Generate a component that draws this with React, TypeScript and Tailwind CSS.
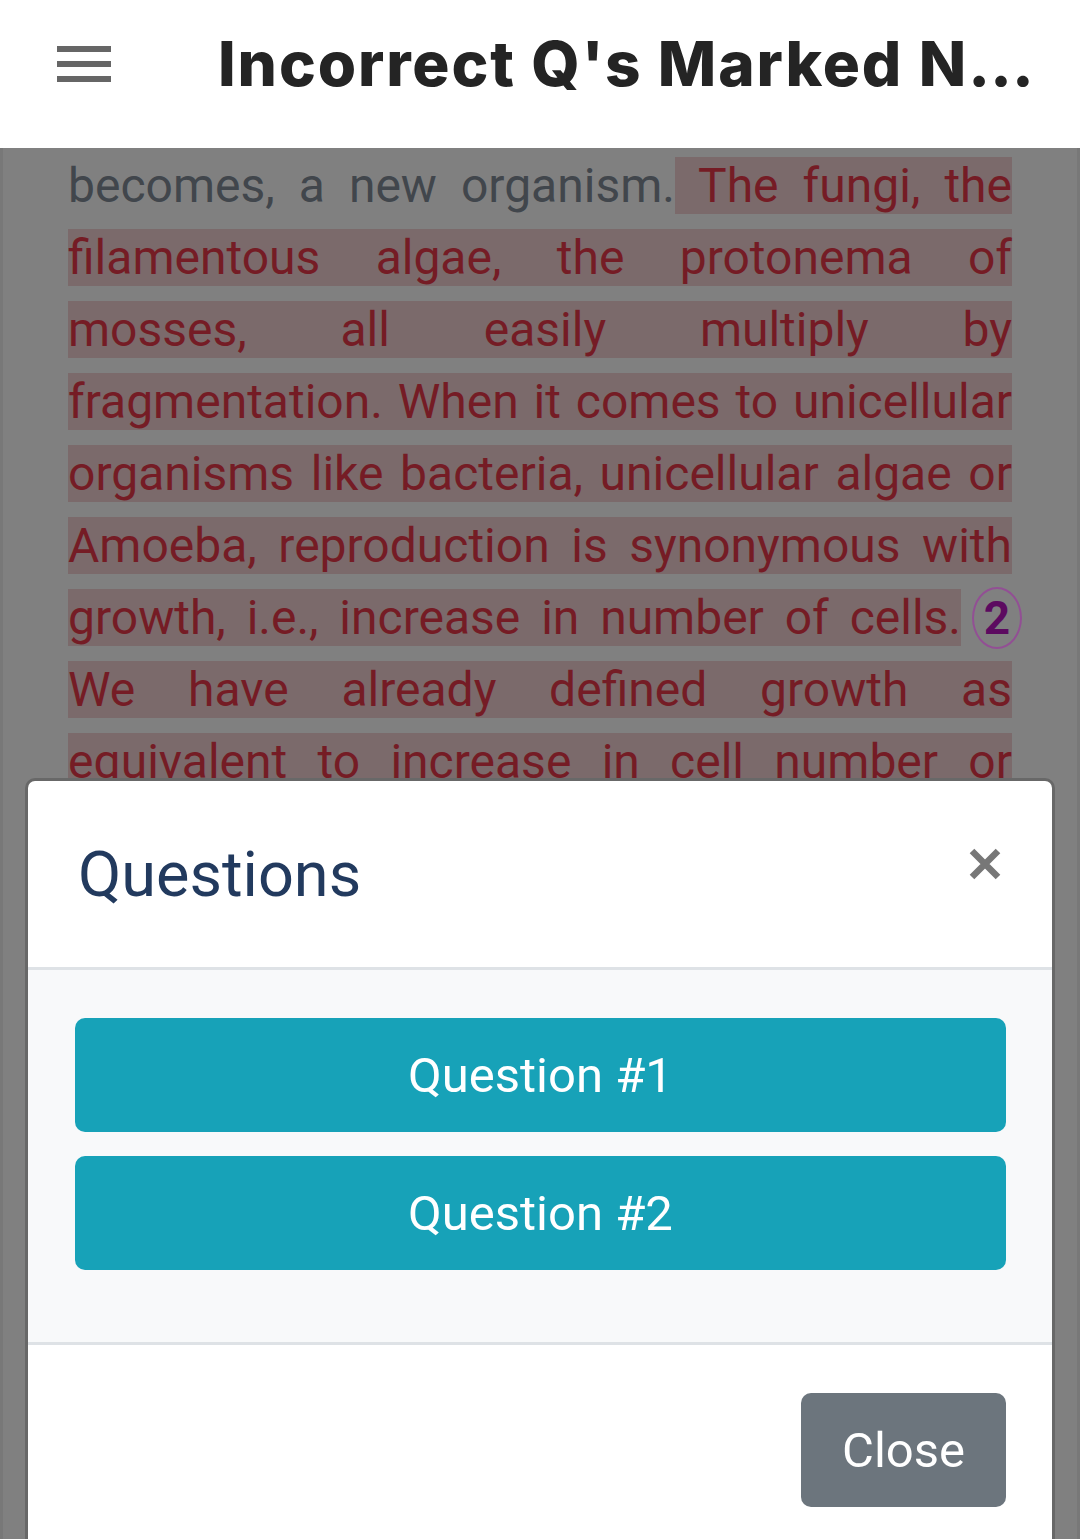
import React from "react";

const HL = "bg-[#7b6a6b] text-[#751c25]";

function Line({ children }: { children: React.ReactNode }) {
  return <div className="text-justify [text-align-last:justify] whitespace-nowrap">{children}</div>;
}

export default function App() {
  return (
    <div className="relative h-[1539px] w-[1080px] overflow-hidden bg-[#808080]" style={{ fontFamily: "Roboto, 'Noto Sans', sans-serif" }}>
      {/* header */}
      <header className="h-[148px] bg-white">
        <div className="flex h-[128px] items-center">
          <div className="ml-[57px] flex w-[54px] shrink-0 flex-col gap-[9px]">
            <span className="h-[6px] bg-[#666666]" />
            <span className="h-[6px] bg-[#666666]" />
            <span className="h-[6px] bg-[#666666]" />
          </div>
          <h1
            className="ml-[107px] whitespace-nowrap text-[62px] font-extrabold leading-none tracking-[1.9px] text-[#242424]"
            style={{ fontFamily: "Inter, 'Noto Sans', sans-serif" }}
          >
            Incorrect Q's Marked N…
          </h1>
        </div>
      </header>

      {/* content */}
      <main className="h-[1391px] border-x-[3px] border-[#787878] pl-[65px] pr-[65px] pt-[2px]">
        <div className="w-[944px] text-[48px] leading-[72px] text-[#41464c]">
          <Line>
            becomes, a new organism.<span className={HL}> The fungi, the</span>
          </Line>
          <Line>
            <span className={HL}>filamentous algae, the protonema of</span>
          </Line>
          <Line>
            <span className={HL}>mosses, all easily multiply by</span>
          </Line>
          <Line>
            <span className={HL}>fragmentation. When it comes to unicellular</span>
          </Line>
          <Line>
            <span className={HL}>organisms like bacteria, unicellular algae or</span>
          </Line>
          <Line>
            <span className={HL}>Amoeba, reproduction is synonymous with</span>
          </Line>
          <div className="flex w-[960px] items-center whitespace-nowrap">
            <div className="w-[893px] shrink-0 text-justify [text-align-last:justify]">
              <span className={HL}>growth, i.e., increase in number of cells.</span>
            </div>
            <span className="ml-[11px] flex h-[62px] w-[50px] shrink-0 items-center justify-center rounded-[50%] border-[2.5px] border-[#924f94] text-[46px] font-bold leading-none text-[#5c0a60]">
              2
            </span>
          </div>
          <Line>
            <span className={HL}>We have already defined growth as</span>
          </Line>
          <Line>
            <span className={HL}>equivalent to increase in cell number or</span>
          </Line>
          <Line>
            <span className={HL}>mass. Hence, we notice that in single-celled</span>
          </Line>
        </div>
      </main>

      {/* modal */}
      <div className="absolute left-[25px] top-[778px] w-[1030px] rounded-t-[10px] border-[3px] border-b-0 border-[#686868] bg-white">
        <div className="flex h-[186px] items-center justify-between pl-[50px] pr-[50px]">
          <h2 className="text-[63px] font-normal leading-none text-[#223a5e]">Questions</h2>
          <svg width="34" height="34" viewBox="0 0 34 34" className="mb-[20px]">
            <path d="M4 4 L30 30 M30 4 L4 30" stroke="#777777" strokeWidth="6.5" strokeLinecap="butt" />
          </svg>
        </div>
        <div className="h-[3px] bg-[#dee2e6]" />
        <div className="flex flex-col gap-[24px] bg-[#f8f9fa] pb-[72px] pl-[47px] pr-[46px] pt-[48px]">
          <button className="flex h-[114px] items-center justify-center rounded-[10px] bg-[#17a2b8] text-[49px] leading-none text-white">
            Question #1
          </button>
          <button className="flex h-[114px] items-center justify-center rounded-[10px] bg-[#17a2b8] text-[49px] leading-none text-white">
            Question #2
          </button>
        </div>
        <div className="h-[3px] bg-[#dee2e6]" />
        <div className="flex h-[300px] justify-end pr-[46px] pt-[48px]">
          <button className="flex h-[114px] w-[205px] items-center justify-center rounded-[10px] bg-[#6c757d] text-[49px] leading-none text-white">
            Close
          </button>
        </div>
      </div>
    </div>
  );
}
